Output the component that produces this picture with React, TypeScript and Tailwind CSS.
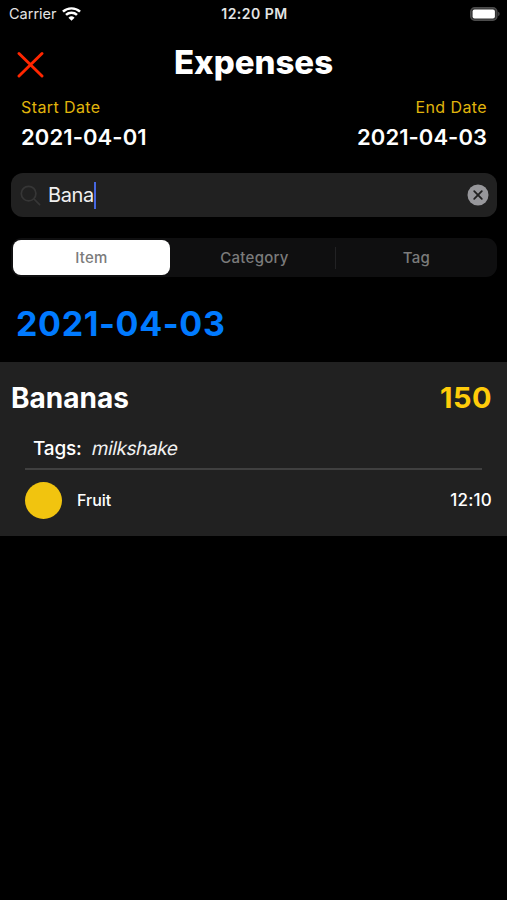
import React, { useState } from 'react';

interface Expense {
    id: number;
    name: string;
    amount: number;
    tags: string[];
    category: string;
    color: string;
    time: string;
}

const segments = ['Item', 'Category', 'Tag'];

const expenses: Expense[] = [
    { id: 1, name: 'Bananas', amount: 150, tags: ['milkshake'], category: 'Fruit', color: '#f1c40f', time: '12:10' },
];

const StatusBar: React.FC = () => (
    <div className="grid h-[27px] grid-cols-3 items-center pl-[9px] pr-[7px] text-[#e4e4e4]">
        <div className="flex items-center gap-[5px]">
            <span className="text-[14.5px]">Carrier</span>
            <svg width="19" height="14" viewBox="0 0 18 14" fill="none" stroke="#fff" strokeWidth="2.4" preserveAspectRatio="none">
                <path d="M0.9 4.7a11.6 11.6 0 0 1 16.2 0" />
                <path d="M3.8 7.9a7.4 7.4 0 0 1 10.4 0" />
                <path d="M9 13.8 6.1 10.8a4.1 4.1 0 0 1 5.8 0z" fill="#fff" stroke="none" />
            </svg>
        </div>
        <span className="text-center text-[14px] font-semibold tracking-[0.5px] whitespace-nowrap">12:20 PM</span>
        <svg className="justify-self-end" width="30" height="14" viewBox="0 0 30 14">
            <rect x="0.7" y="0.7" width="26.2" height="12.6" rx="4" fill="#333" stroke="#4c4c4c" strokeWidth="1.4" />
            <rect x="2.6" y="2.5" width="22.3" height="9" rx="2" fill="#fff" />
            <path d="M28.2 4.8a2.4 2.4 0 0 1 0 4.4z" fill="#4c4c4c" />
        </svg>
    </div>
);

const ExpenseCard: React.FC<{ expense: Expense }> = ({ expense }) => (
    <div className="h-[174px] bg-[#212121] pt-[17px]">
        <div className="flex h-[37px] items-center justify-between pl-[11px] pr-[15px] text-[28px] font-bold">
            <span>{expense.name}</span>
            <span className="text-[29px] tracking-[0.5px] text-[#ffcc0a]">{expense.amount}</span>
        </div>
        <div className="mt-[17px] flex h-8 items-center gap-[10px] pl-[33px] text-[19px]">
            <span className="font-medium tracking-[-0.2px]">Tags:</span>
            <span className="-skew-x-12 tracking-[-0.4px] text-[#f0f0f0]">{expense.tags.join(', ')}</span>
        </div>
        <div className="mr-[25px] mt-[3px] ml-[25px] h-[2px] bg-[#404040]" />
        <div className="mt-[10px] flex h-[40px] items-center pl-[25px] pr-[15px] text-base font-medium">
            <span className="size-[37px] rounded-full" style={{ backgroundColor: expense.color }} />
            <span className="ml-[15px]">{expense.category}</span>
            <span className="ml-auto pt-px text-[17px] tracking-[0.2px]">{expense.time}</span>
        </div>
    </div>
);

const App: React.FC = () => {
    const [query, setQuery] = useState('Bana');
    const [active, setActive] = useState('Item');

    return (
        <div className="h-[900px] w-[507px] overflow-hidden bg-black font-['Inter',sans-serif] text-white">
            <StatusBar />
            <header className="grid h-[70px] grid-cols-[1fr_auto_1fr] items-center px-[17px]">
                <button aria-label="Close" className="pt-[4px]">
                    <svg width="27" height="27" viewBox="0 0 27 27" stroke="#ff2600" strokeWidth="2.9" strokeLinecap="round">
                        <path d="M2 2.5 25 25M25 2.5 2 25" />
                    </svg>
                </button>
                <h1 className="pt-[2px] text-[33px] font-extrabold">Expenses</h1>
            </header>

            <div className="flex justify-between pr-[20px] pl-[21px]">
                <div>
                    <div className="h-[20px] text-base leading-[20px] tracking-[0.4px] text-[#e0b50c]">Start Date</div>
                    <div className="mt-[4px] h-[32px] text-[22px] leading-[32px] font-semibold tracking-[0.1px]">2021-04-01</div>
                </div>
                <div className="text-right">
                    <div className="h-[20px] text-base leading-[20px] tracking-[0.4px] text-[#e0b50c]">End Date</div>
                    <div className="mt-[4px] h-[32px] text-[22px] leading-[32px] font-semibold tracking-[0.05px]">2021-04-03</div>
                </div>
            </div>

            <div className="mr-[10px] ml-[11px] mt-[20px] flex h-[44px] items-center rounded-[12px] bg-[#212121] pr-[8px] pl-[9px]">
                <svg width="21" height="21" viewBox="0 0 21 21" fill="none" stroke="#363636" strokeWidth="1.7" strokeLinecap="round">
                    <circle cx="8.6" cy="8.6" r="7.3" />
                    <path d="m14 14 5.6 5.6" />
                </svg>
                <span className="ml-[7px] text-[20px] tracking-[-0.4px] text-[#f0f0f0]">{query}</span>
                <span className="h-[27px] w-[2px] bg-[#4667e0]" />
                <button className="ml-auto" aria-label="Clear" onClick={() => setQuery('')}>
                    <svg width="22" height="22" viewBox="0 0 22 22">
                        <circle cx="11" cy="11" r="10.5" fill="#97979b" />
                        <path d="m7.2 7.2 7.6 7.6m0-7.6-7.6 7.6" stroke="#212121" strokeWidth="1.8" strokeLinecap="round" />
                    </svg>
                </button>
            </div>

            <div className="mr-[10px] ml-[11px] mt-[21px] flex h-[39px] items-center rounded-[11px] bg-[#0f0f10] p-[2px] text-[15px] font-medium tracking-[0.25px] text-[#7b7b7b]">
                {segments.map((name, i) => (
                    <React.Fragment key={name}>
                        {i === 2 && <span className="h-[22px] w-px bg-[#222224]" />}
                        <button
                            onClick={() => setActive(name)}
                            className={`h-[35px] pt-px ${i === 0 ? 'w-[157px]' : ''} ${i === 1 ? 'w-[165px] pl-[4px]' : ''} ${i === 2 ? 'flex-1 pl-[2px]' : ''} ${active === name ? 'rounded-[8px] bg-white' : ''}`}
                        >
                            {name}
                        </button>
                    </React.Fragment>
                ))}
            </div>

            <h2 className="mt-[26px] mb-[18px] pl-[16px] text-[34px] leading-[41px] font-bold tracking-[0.65px] text-[#007aff]">2021-04-03</h2>

            {expenses.map((expense) => (
                <ExpenseCard key={expense.id} expense={expense} />
            ))}
        </div>
    );
};

export default App;
